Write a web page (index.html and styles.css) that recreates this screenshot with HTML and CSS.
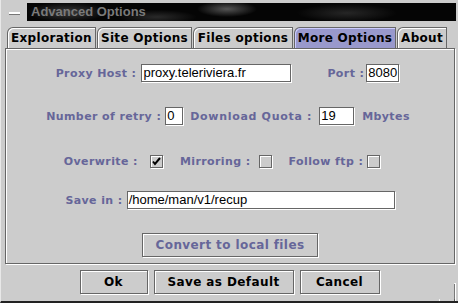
FILE: index.html
```html
<!DOCTYPE html>
<html>
<head>
	<title>Advanced Options</title>
	<link rel="stylesheet" href="styles.css">
</head>
<body>
	<div class="window">

		<div class="titlebar">
			<div class="menu_btn"><span class="dash"></span></div>
			<div class="title">Advanced Options</div>
		</div>

		<div class="tabs">
			<div class="tab t1">Exploration</div>
			<div class="tab t2">Site Options</div>
			<div class="tab t3">Files options</div>
			<div class="tab t4 active">More Options</div>
			<div class="tab t5">About</div>
		</div>

		<div class="panel">
			<div class="row row_proxy">
				<span class="lbl">Proxy Host :</span>
				<span class="field f_host">proxy.teleriviera.fr</span>
				<span class="lbl l_port">Port :</span>
				<span class="field f_port">8080</span>
			</div>

			<div class="row row_retry">
				<span class="lbl">Number of retry :</span>
				<span class="field f_retry">0</span>
				<span class="lbl l_quota">Download Quota :</span>
				<span class="field f_quota">19</span>
				<span class="lbl l_mb">Mbytes</span>
			</div>

			<div class="row row_check">
				<span class="lbl">Overwrite :</span>
				<span class="check c_over">
					<svg width="9" height="9" viewBox="0 0 9 9"><path d="M1 4.5 L3 7 L8 1" fill="none" stroke="#000" stroke-width="2"/></svg>
				</span>
				<span class="lbl l_mirror">Mirroring :</span>
				<span class="check c_mirror"></span>
				<span class="lbl l_ftp">Follow ftp :</span>
				<span class="check c_ftp"></span>
			</div>

			<div class="row row_save">
				<span class="lbl">Save in :</span>
				<span class="field f_save">/home/man/v1/recup</span>
			</div>

			<div class="row row_convert">
				<span class="btn convert">Convert to local files</span>
			</div>
		</div>

		<div class="buttons">
			<span class="btn b_ok">Ok</span>
			<span class="btn b_def">Save as Default</span>
			<span class="btn b_cancel">Cancel</span>
		</div>

		<div class="grip"></div>
	</div>
</body>
</html>
```

FILE: styles.css
```css
body{
	margin: 0;
	background-color: #cccccc;
}
.window{
	position: relative;
	width: 457px;
	height: 301px;
	border-left: 1px solid #e8e8e8;
	border-bottom: 2px solid #222;
	background-color: #cccccc;
	font-family: "DejaVu Sans", sans-serif;
	overflow: hidden;
}
.titlebar{
	display: flex;
	height: 18px;
	margin: 3px 2px 0 3px;
	gap: 4px;
}
.menu_btn{
	width: 19px;
	height: 17px;
	position: relative;
}
.dash{
	position: absolute;
	left: 5px;
	top: 9px;
	width: 11px;
	height: 2px;
	background-color: #fff;
	border-bottom: 1px solid #777;
}
.title{
	flex: 1;
	background-color: #050505;
	background-image:
		radial-gradient(ellipse 40px 10px at 40px 9px, #3a3a3a, transparent),
		radial-gradient(ellipse 30px 8px at 200px 6px, #555, transparent),
		radial-gradient(ellipse 40px 7px at 130px 14px, #2a2a2a, transparent),
		radial-gradient(ellipse 50px 9px at 320px 10px, #262626, transparent);
	color: #7a7a7a;
	font: bold 13px "Liberation Sans", sans-serif;
	line-height: 18px;
	padding-left: 4px;
}
.tabs{
	display: flex;
	margin: 6px 0 0 6px;
	height: 21px;
	gap: 1px;
}
.tab{
	box-sizing: border-box;
	height: 21px;
	border: 1px solid #666;
	border-bottom: none;
	border-top-left-radius: 6px;
	box-shadow: inset 1px 1px 0 #fff;
	font-weight: bold;
	font-size: 12px;
	line-height: 20px;
	text-align: center;
	color: #000;
	letter-spacing: 0.3px;
}
.t1{ width: 89px; }
.t2{ width: 95px; }
.t3{ width: 100px; }
.t4{ width: 102px; }
.t5{ width: 50px; }
.tab.active{
	background-color: #9999cc;
	box-shadow: inset 1px 1px 0 #ccccff;
}
.panel{
	box-sizing: border-box;
	width: 450px;
	height: 216px;
	margin-left: 4px;
	border: 1px solid #666;
	box-shadow: inset 1px 1px 0 #fff, 1px 1px 0 #fff;
	display: flex;
	flex-direction: column;
	align-items: center;
	padding-top: 15px;
}
.row{
	display: flex;
	align-items: center;
	height: 18px;
}
.row_proxy{ margin-left: -5px; }
.row_retry{ margin-top: 25px; margin-left: -4px; }
.row_check{ margin-top: 27px; margin-left: -16px; }
.row_save{ margin-top: 21px; }
.row_convert{ margin-top: 24px; height: 24px; }
.lbl{
	color: #666699;
	font-weight: bold;
	font-size: 11px;
	letter-spacing: 0.4px;
	white-space: nowrap;
}
.field{
	box-sizing: border-box;
	height: 18px;
	background-color: #fff;
	border: 1px solid #666;
	box-shadow: 1px 1px 0 #fff;
	font: 13px "Liberation Sans", sans-serif;
	line-height: 16px;
	padding-left: 1px;
	color: #000;
	margin-left: 5px;
}
.f_host{ width: 150px; }
.l_port{ margin-left: 36px; }
.f_port{ width: 33px; margin-left: 2px; }
.f_retry{ width: 18px; margin-left: 4px; }
.l_quota{ margin-left: 7px; letter-spacing: 0.7px; }
.f_quota{ width: 35px; margin-left: 7px; }
.l_mb{ margin-left: 8px; }
.f_save{ width: 268px; margin-left: 4px; }
.check{
	box-sizing: border-box;
	width: 13px;
	height: 13px;
	border: 1px solid #666;
	box-shadow: inset 1px 1px 0 #fff, 1px 1px 0 #fff;
	display: flex;
	align-items: center;
	justify-content: center;
}
.c_over{ margin-left: 12px; }
.c_mirror{ margin-left: 8px; }
.c_ftp{ margin-left: 4px; }
.l_mirror{ margin-left: 17px; }
.l_ftp{ margin-left: 17px; }
.btn{
	box-sizing: border-box;
	height: 24px;
	border: 1px solid #666;
	box-shadow: inset 1px 1px 0 #fff, 1px 1px 0 #fff;
	font-weight: bold;
	font-size: 12px;
	line-height: 22px;
	text-align: center;
	letter-spacing: 0.4px;
	color: #000;
}
.convert{
	width: 176px;
	color: #666699;
}
.buttons{
	display: flex;
	justify-content: center;
	gap: 6px;
	margin-top: 6px;
}
.b_ok{ width: 68px; }
.b_def{ width: 140px; }
.b_cancel{ width: 80px; }
.grip{
	position: absolute;
	right: 2px;
	bottom: 0;
	width: 15px;
	height: 17px;
	border-left: 1px solid #fff;
	border-top: 1px solid #fff;
	border-right: 1px solid #fff;
	box-shadow: inset -1px 0 0 #555;
	clip-path: polygon(0 100%, 0 90%, 90% 90%, 90% 0, 100% 0, 100% 100%);
}
```
